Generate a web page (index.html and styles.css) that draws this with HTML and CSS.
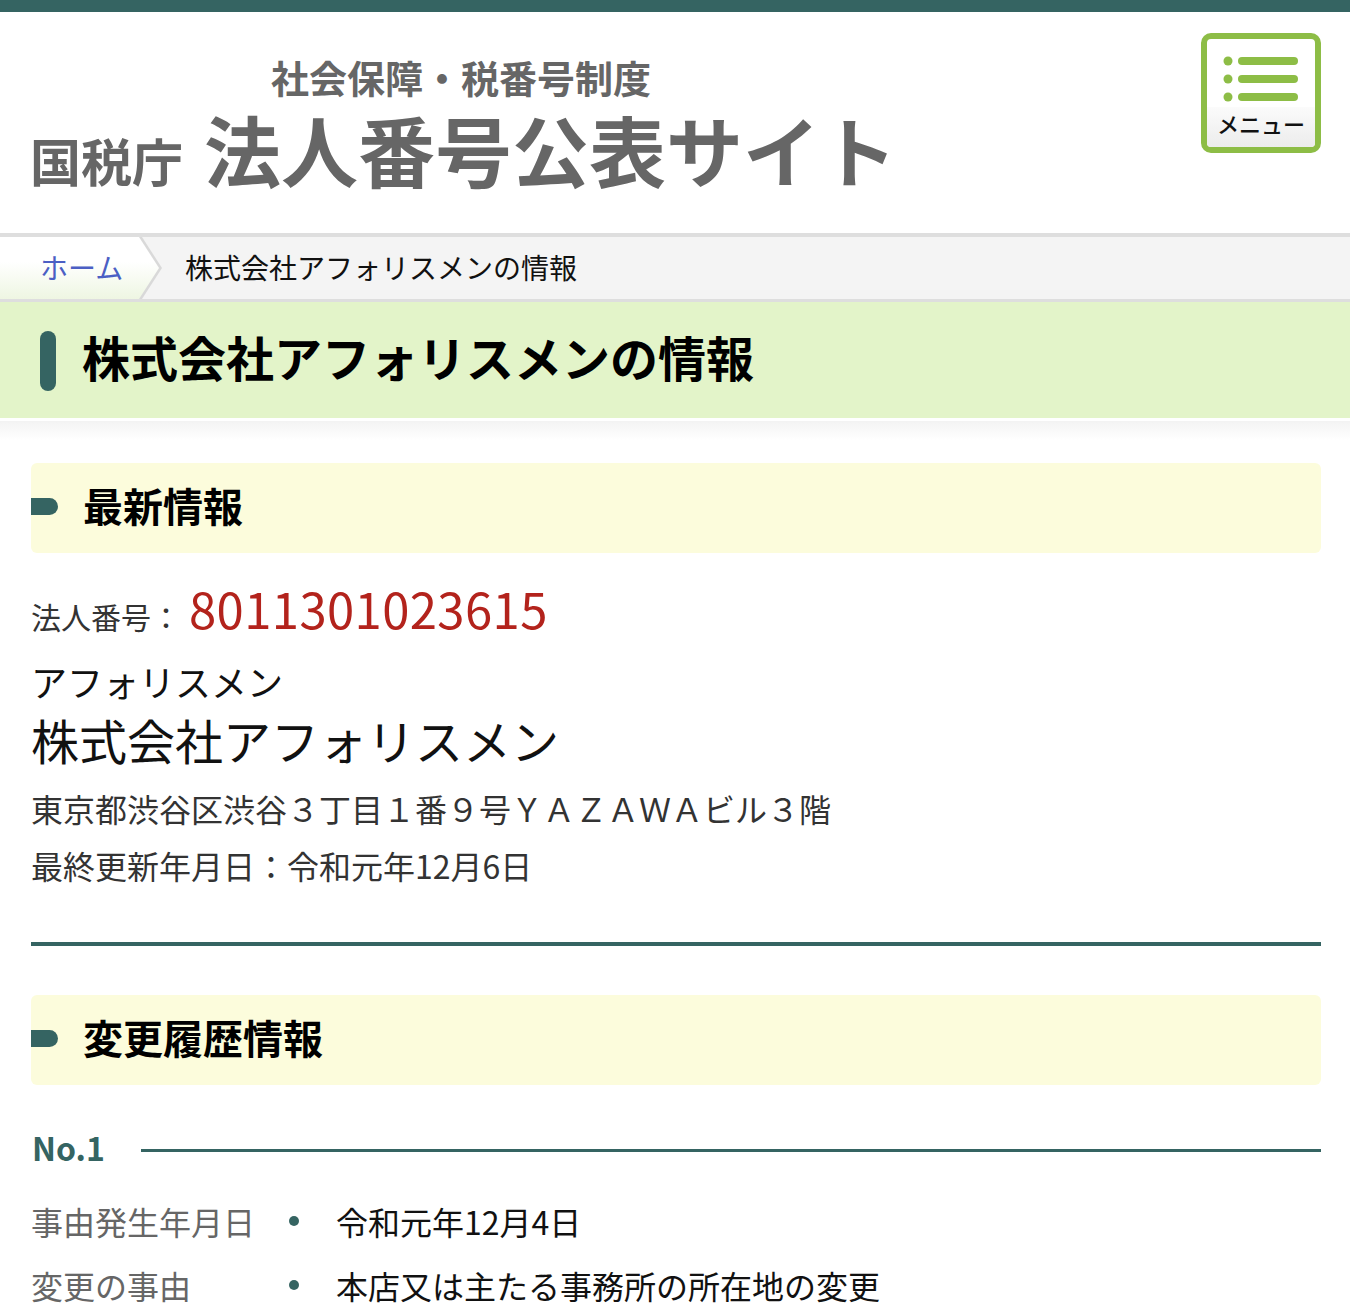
FILE: index.html
```html
<!DOCTYPE html>
<html lang="ja">

<head>
  <meta charset="UTF-8">
  <meta name="viewport" content="width=device-width, initial-scale=1.0">
  <title>株式会社アフォリスメンの情報｜国税庁法人番号公表サイト</title>
  <link rel="stylesheet" href="styles.css">
</head>

<body>
  <div class="top-bar"></div>

  <header class="site-header">
    <a class="site-logo" href="#">
      <span class="logo-sub">社会保障・税番号制度</span>
      <span class="logo-main">
        <span class="logo-agency">国税庁</span>
        <span class="logo-title">法人番号公表サイト</span>
      </span>
    </a>
    <button class="menu-btn" type="button">
      <span class="menu-icon">
        <svg width="108" height="68" viewBox="0 0 108 68">
          <g fill="#8dbd46">
            <circle cx="21" cy="22" r="4.5" />
            <circle cx="21" cy="40" r="4.5" />
            <circle cx="21" cy="58" r="4.5" />
          </g>
          <g stroke="#8dbd46" stroke-width="8" stroke-linecap="round">
            <line x1="35" y1="22" x2="87" y2="22" />
            <line x1="35" y1="40" x2="87" y2="40" />
            <line x1="35" y1="58" x2="87" y2="58" />
          </g>
        </svg>
      </span>
      <span class="menu-label">メニュー</span>
    </button>
  </header>

  <nav class="breadcrumb">
    <a class="crumb-home" href="#">ホーム</a>
    <span class="crumb-current">株式会社アフォリスメンの情報</span>
  </nav>

  <div class="page-title">
    <h1>株式会社アフォリスメンの情報</h1>
  </div>

  <main>
    <section>
      <h2 class="section-heading">最新情報</h2>
      <div class="corp-info">
        <p class="corp-number"><span class="label">法人番号：</span><span class="num">8011301023615</span></p>
        <p class="corp-kana">アフォリスメン</p>
        <p class="corp-name">株式会社アフォリスメン</p>
        <p class="corp-address">東京都渋谷区渋谷３丁目１番９号ＹＡＺＡＷＡビル３階</p>
        <p class="corp-updated">最終更新年月日：令和元年12月6日</p>
      </div>
    </section>

    <hr class="divider">

    <section class="history">
      <h2 class="section-heading">変更履歴情報</h2>
      <div class="history-item">
        <h3 class="history-no">No.1</h3>
        <dl class="history-list">
          <dt>事由発生年月日</dt>
          <dd>令和元年12月4日</dd>
          <dt>変更の事由</dt>
          <dd>本店又は主たる事務所の所在地の変更</dd>
        </dl>
      </div>
    </section>
  </main>
</body>

</html>
```

FILE: styles.css
```css
* {
  box-sizing: border-box;
}

body {
  margin: 0;
  font-family: "Noto Sans CJK JP", "Noto Sans", sans-serif;
  color: #333;
  background: #fff;
}

.top-bar {
  height: 12px;
  background: #356462;
}

/* header */
.site-header {
  display: flex;
  justify-content: space-between;
  align-items: flex-start;
  height: 221px;
  padding: 0 29px 0 30px;
}

.site-logo {
  display: flex;
  flex-direction: column;
  padding-top: 45px;
  color: #666;
  font-weight: 700;
  text-decoration: none;
}

.logo-sub {
  padding-left: 241px;
  font-size: 38px;
  line-height: 40px;
}

.logo-main {
  display: flex;
  align-items: baseline;
  gap: 21px;
  margin-top: 12px;
}

.logo-agency {
  font-size: 51px;
  line-height: 56px;
}

.logo-title {
  font-size: 77px;
  line-height: 80px;
}

.menu-btn {
  display: flex;
  flex-direction: column;
  width: 120px;
  height: 120px;
  margin-top: 21px;
  padding: 0;
  border: 6px solid #8dbd46;
  border-radius: 10px;
  background: #fff;
  overflow: hidden;
  font-family: inherit;
  cursor: pointer;
}

.menu-icon {
  display: block;
  height: 68px;
}

.menu-icon svg {
  display: block;
}

.menu-label {
  display: block;
  flex: 1;
  background: linear-gradient(#fbfbfb, #ececec);
  color: #111;
  font-size: 22px;
  font-weight: 500;
  line-height: 33px;
  text-align: center;
}

/* breadcrumb */
.breadcrumb {
  display: flex;
  height: 69px;
  padding-bottom: 3px;
  border-top: 4px solid #dedede;
  border-bottom: 3px solid #dedede;
  background: #f4f4f4;
  font-size: 28px;
}

.crumb-home {
  position: relative;
  z-index: 0;
  display: flex;
  align-items: center;
  width: 162px;
  margin-bottom: -3px;
  padding: 0 0 3px 40px;
  color: #4b5fc4;
  text-decoration: none;
}

.crumb-home::before,
.crumb-home::after {
  content: "";
  position: absolute;
  inset: 0;
  z-index: -1;
}

.crumb-home::before {
  background: #d9d9d9;
  clip-path: polygon(0 0, 142px 0, 162px 50%, 142px 100%, 0 100%);
}

.crumb-home::after {
  background: linear-gradient(#fff 40%, #eef6e2);
  clip-path: polygon(0 0, 139px 0, 159px 50%, 139px 100%, 0 100%);
}

.crumb-current {
  display: flex;
  align-items: center;
  padding-left: 23px;
  color: #111;
}

/* page title */
.page-title {
  display: flex;
  align-items: center;
  gap: 26px;
  height: 116px;
  padding-left: 40px;
  background: #e3f4c9;
}

.page-title::before {
  content: "";
  width: 16px;
  height: 60px;
  margin-top: 2px;
  border-radius: 8px;
  background: #356462;
}

.page-title h1 {
  margin: 0 0 8px;
  color: #000;
  font-size: 48px;
  font-weight: 700;
  line-height: 1;
}

main {
  padding: 45px 29px 60px 31px;
  background: linear-gradient(#fff 3px, #f3f3f3 3px, #fff 22px) no-repeat top / 100% 22px;
}

.section-heading {
  display: flex;
  align-items: center;
  gap: 25px;
  height: 90px;
  margin: 0;
  padding-bottom: 6px;
  border-radius: 6px;
  background: #fcfcdc;
  color: #000;
  font-size: 40px;
  font-weight: 700;
}

.section-heading::before {
  content: "";
  width: 27px;
  height: 17px;
  margin-top: 2px;
  border-radius: 0 9px 9px 0;
  background: #356462;
}

/* latest info */
.corp-info p {
  margin: 0;
}

.corp-number {
  padding-top: 25px;
  font-size: 49px;
  line-height: 60px;
}

.corp-number .label {
  font-size: 30px;
  line-height: 1;
}

.corp-number .num {
  margin-left: 8px;
  color: #b3231c;
  letter-spacing: 0.4px;
}

.corp-kana {
  margin-top: 21px !important;
  color: #111;
  font-size: 36px;
  line-height: 44px;
}

.corp-name {
  margin-top: 8px !important;
  color: #111;
  font-size: 48px;
  line-height: 56px;
}

.corp-address {
  margin-top: 19px !important;
  font-size: 32px;
  line-height: 44px;
}

.corp-updated {
  margin-top: 13px !important;
  font-size: 32px;
  line-height: 44px;
}

.divider {
  height: 4px;
  margin: 55px 0 0;
  border: 0;
  background: #356462;
}

/* history */
.history {
  margin-top: 49px;
}

.history-no {
  display: flex;
  align-items: center;
  margin: 42px 0 0 1px;
  color: #356462;
  font-size: 32px;
  font-weight: 700;
  line-height: 40px;
}

.history-no::after {
  content: "";
  flex: 1;
  height: 3px;
  margin: 6px 0 0 36px;
  background: #356462;
}

.history-list {
  display: grid;
  grid-template-columns: 258px 1fr;
  row-gap: 20px;
  margin: 32px 0 0;
  font-size: 32px;
  line-height: 44px;
}

.history-list dt {
  color: #666;
}

.history-list dd {
  display: flex;
  align-items: center;
  gap: 37px;
  margin: 0;
  color: #111;
}

.history-list dd::before {
  content: "";
  width: 10px;
  height: 10px;
  border-radius: 50%;
  background: #356462;
}
```
